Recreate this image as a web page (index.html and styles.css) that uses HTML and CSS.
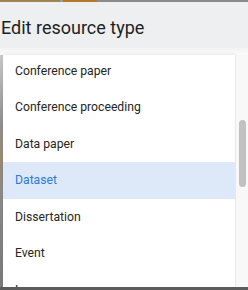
FILE: index.html
```html
<!DOCTYPE html>
<html lang="en">

<head>
  <meta charset="UTF-8" />
  <meta name="viewport" content="width=device-width, initial-scale=1.0">
  <title>Edit resource type</title>
  <link rel="stylesheet" href="styles.css">
</head>

<body>
  <!-- page behind the dialog -->
  <div class="page-strip">
    <span class="strip-a"></span>
    <span class="strip-gap"></span>
    <span class="strip-b"></span>
    <span class="strip-rest"></span>
  </div>

  <div class="dialog-header">
    <h2>Edit resource type</h2>
  </div>

  <div class="dialog-body">
    <div class="shadow-band"></div>
    <div class="menu-row">
      <div class="gutter"></div>
      <div class="menu">
        <ul class="menu-list">
          <li>Conference paper</li>
          <li>Conference proceeding</li>
          <li>Data paper</li>
          <li class="selected">Dataset</li>
          <li>Dissertation</li>
          <li>Event</li>
          <li>Image</li>
        </ul>
      </div>
      <div class="scroll-track">
        <div class="scroll-thumb"></div>
      </div>
    </div>
  </div>

  <div class="page-bottom"></div>
</body>

</html>
```

FILE: styles.css
```css
body {
  margin: 0;
  width: 248px;
  height: 290px;
  overflow: hidden;
  font-family: Roboto, "Noto Sans", Arial, sans-serif;
  background: #8c8c8c;
  display: flex;
  flex-direction: column;
}

.page-strip {
  display: flex;
  height: 2px;
  flex-shrink: 0;
}

.strip-a {
  width: 60px;
  background: #a08253;
}

.strip-gap {
  width: 3px;
  background: #9a9a9a;
}

.strip-b {
  width: 34px;
  background: #b27a2c;
}

.strip-rest {
  flex: 1;
  background: #8a8a8a;
}

.dialog-header {
  height: 46px;
  background: #eeeff1;
  flex-shrink: 0;
  display: flex;
  align-items: center;
}

.dialog-header h2 {
  margin: 0 0 0 1px;
  font-size: 18px;
  font-weight: 400;
  color: #1f1f1f;
  padding-top: 4px;
}

.dialog-body {
  flex: 1;
  display: flex;
  flex-direction: column;
  min-height: 0;
}

.shadow-band {
  height: 7px;
  flex-shrink: 0;
  background: linear-gradient(#f3f3f4, #fbfbfb);
}

.menu-row {
  flex: 1;
  display: flex;
  min-height: 0;
}

.gutter {
  width: 3px;
  background: linear-gradient(#c9c9c9, #8e8e8e 30%, #9a8a70 45%, #8a8a8a 60%, #7a7a7a);
}

.menu {
  flex: 1;
  background: #fff;
  overflow: hidden;
  box-shadow: 0 -1px 3px rgba(0, 0, 0, 0.08);
}

.menu-list {
  list-style: none;
  margin: -2.5px 0 0;
  padding: 0;
}

.menu-list li {
  height: 36.5px;
  display: flex;
  align-items: center;
  padding-left: 12px;
  font-size: 12.2px;
  color: #262626;
}

.menu-list li.selected {
  background: #dde8f8;
  color: #2a7ad6;
}

.scroll-track {
  width: 12px;
  background: #f8f8f8;
  border-left: 1px solid #e8e8e8;
  position: relative;
}

.scroll-thumb {
  position: absolute;
  left: 3px;
  top: 65px;
  width: 7px;
  height: 67px;
  border-radius: 4px;
  background: #c1c1c1;
}

.page-bottom {
  height: 3px;
  flex-shrink: 0;
  background: #5c5c5c;
}
```
